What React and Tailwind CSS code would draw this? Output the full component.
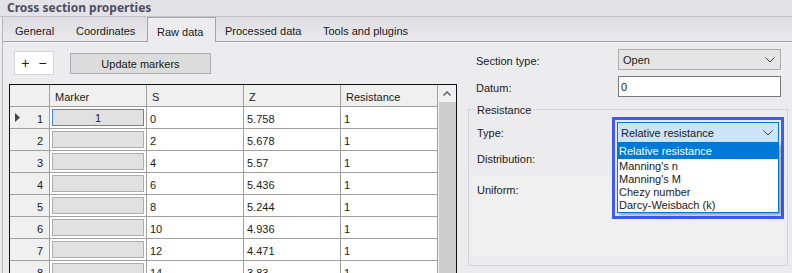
import React from "react";

const rows = [
  ["1", "1", "0", "5.758", "1"],
  ["2", "", "2", "5.678", "1"],
  ["3", "", "4", "5.57", "1"],
  ["4", "", "6", "5.436", "1"],
  ["5", "", "8", "5.244", "1"],
  ["6", "", "10", "4.936", "1"],
  ["7", "", "12", "4.471", "1"],
  ["8", "", "14", "3.83", "1"],
];

function Chevron() {
  return (
    <svg width="10" height="6" viewBox="0 0 10 6">
      <path d="M0.5 0.5 L5 5 L9.5 0.5" fill="none" stroke="#444" strokeWidth="1" />
    </svg>
  );
}

export default function App() {
  return (
    <div
      className="w-[792px] h-[273px] overflow-hidden bg-[#ececef] text-[11px] text-[#1a1a1a] relative"
      style={{ fontFamily: '"Liberation Sans", Arial, sans-serif' }}
    >
      {/* title */}
      <div
        className="h-[17px] bg-[#e2e2e7] border-b border-[#c4c4ca] pl-[7px] flex items-center font-bold text-[12px] text-[#4e4e60] leading-none"
        style={{ fontFamily: '"Noto Sans", sans-serif' }}
      >
        Cross section properties
      </div>
      <div className="ml-[2px] border-l border-[#b8b8bc] h-[256px] flex flex-col">
        {/* tabs */}
        <div className="h-[27px] flex items-end bg-gradient-to-b from-[#dedee2] to-[#eaeaee] relative">
          <div className="absolute left-0 right-0 bottom-0 h-px bg-[#a6a6aa]" />
          <div className="h-[25px] w-[73px] flex items-center pl-[12px] pt-[4px] leading-none">General</div>
          <div className="h-[25px] w-[71px] flex items-center pt-[4px] leading-none">Coordinates</div>
          <div className="relative z-10 h-[25px] w-[69px] flex items-center pl-[9px] pt-[4px] bg-[#ececef] border border-b-0 border-[#a6a6aa] leading-none">
            Raw data
          </div>
          <div className="h-[25px] w-[107px] flex items-center pl-[9px] pt-[4px] leading-none">Processed data</div>
          <div className="h-[25px] flex items-center pt-[4px] leading-none">Tools and plugins</div>
        </div>
        {/* content */}
        <div className="flex flex-1">
          {/* left */}
          <div className="w-[465px] pl-[6px] pt-[9px] flex flex-col">
            <div className="flex items-start gap-[16px] pl-[5px]">
              <div className="w-[40px] h-[24px] bg-white border border-[#d4d4d8] flex items-center justify-center gap-[9px] text-[14px] leading-none">
                <span>+</span>
                <span>−</span>
              </div>
              <div className="mt-[2px] w-[141px] h-[21px] bg-[#dcdcdc] border border-[#adadad] flex items-center justify-center pt-[2px] leading-none">
                Update markers
              </div>
            </div>
            <div className="mt-[9px] w-[448px] border border-[#111] flex bg-[#f0f0f0] h-[200px] overflow-hidden">
              <div className="flex-1">
                {/* header */}
                <div className="flex h-[22px] border-b border-[#a0a0a0] bg-[#f0f0f0]">
                  <div className="w-[40px] border-r border-[#a0a0a0]" />
                  {["Marker", "S", "Z", "Resistance"].map((h) => (
                    <div key={h} className="w-[97px] border-r border-[#a0a0a0] flex items-center pl-[5px] pt-[3px] leading-none">
                      {h}
                    </div>
                  ))}
                </div>
                {rows.map((r, i) => (
                  <div key={i} className="flex h-[22px] border-b border-[#a0a0a0]">
                    <div className="w-[40px] border-r border-[#a0a0a0] bg-[#f0f0f0] flex items-center justify-end pr-[6px] pt-[3px] relative leading-none">
                      {i === 0 && (
                        <svg width="5" height="9" viewBox="0 0 5 9" className="absolute left-[5px] top-[6px]">
                          <path d="M0 0 L5 4.5 L0 9 Z" fill="#444" />
                        </svg>
                      )}
                      {r[0]}
                    </div>
                    <div className="w-[97px] border-r border-[#a0a0a0] bg-white p-[2px]">
                      <div
                        className={`h-full flex items-center justify-center bg-[#e1e1e1] border pt-[2px] leading-none ${
                          i === 0 ? "border-[#3d8ed4]" : "border-[#adadad]"
                        }`}
                      >
                        {r[1]}
                      </div>
                    </div>
                    {[r[2], r[3], r[4]].map((c, j) => (
                      <div key={j} className="w-[97px] border-r border-[#a0a0a0] bg-white flex items-center pl-[3px] pt-[3px] leading-none">
                        {c}
                      </div>
                    ))}
                  </div>
                ))}
              </div>
              {/* scrollbar */}
              <div className="w-[18px] bg-[#f0f0f0] flex flex-col items-center">
                <div className="h-[17px] flex items-center justify-center">
                  <svg width="8" height="5" viewBox="0 0 8 5">
                    <path d="M0.5 4.5 L4 1 L7.5 4.5" fill="none" stroke="#555" strokeWidth="1.3" />
                  </svg>
                </div>
                <div className="w-[17px] flex-1 bg-[#cdcdcd]" />
              </div>
            </div>
          </div>
          {/* right */}
          <div className="w-[320px] flex flex-col pt-[7px]">
            <div className="flex items-center h-[21px] pl-[8px]">
              <span className="w-[142px] pt-[3px] leading-none">Section type:</span>
              <div className="w-[163px] h-[21px] bg-[#e5e5e5] border border-[#adadad] flex items-center justify-between pl-[4px] pr-[5px] leading-none">
                <span className="pt-[2px]">Open</span>
                <Chevron />
              </div>
            </div>
            <div className="flex items-center h-[21px] mt-[6px] pl-[8px]">
              <span className="w-[142px] pt-[3px] leading-none">Datum:</span>
              <div className="w-[163px] h-[21px] bg-white border border-[#7a7a7a] flex items-center pl-[2px] pt-[2px] leading-none">
                0
              </div>
            </div>
            {/* group box */}
            <div className="mt-[12px] w-[320px] h-[157px] border border-[#d6d6da] relative px-[2px] flex flex-col">
              <span className="absolute left-[6px] top-[-5px] bg-[#ececef] px-[2px] leading-none">Resistance</span>
              <div className="flex items-center h-[21px] mt-[11px] pl-[6px] pt-[3px] leading-none">
                <span>Type:</span>
              </div>
              <div className="flex items-center h-[21px] mt-[5px] pl-[6px] pt-[3px] leading-none">
                <span>Distribution:</span>
              </div>
              <div className="mt-[7px] h-[81px] bg-[#f0f0f0] pl-[6px] pt-[10px] leading-none">Uniform:</div>
            </div>
          </div>
        </div>
      </div>

      {/* open dropdown overlay */}
      <div className="absolute left-[612px] top-[117px] w-[172px] h-[102px] border-[3px] border-[#3d5afe] bg-[#ececef] p-[2px]">
        <div className="h-[21px] bg-[#cce4f7] border border-[#0078d7] flex items-center justify-between pl-[3px] pr-[5px] leading-none">
          <span className="pt-[2px]">Relative resistance</span>
          <Chevron />
        </div>
        <div className="h-[70px] bg-white border border-[#0078d7] border-t-0 shadow-[2px_2px_3px_rgba(0,0,0,0.35)] flex flex-col leading-none">
          <div className="h-[16px] bg-[#0078d7] text-white flex items-center pl-[1px] pt-[1px]">Relative resistance</div>
          <div className="h-[13px] flex items-center pl-[1px] pt-[1px]">Manning's n</div>
          <div className="h-[13px] flex items-center pl-[1px] pt-[1px]">Manning's M</div>
          <div className="h-[13px] flex items-center pl-[1px] pt-[1px]">Chezy number</div>
          <div className="h-[13px] flex items-center pl-[1px] pt-[1px]">Darcy-Weisbach (k)</div>
        </div>
      </div>
    </div>
  );
}
